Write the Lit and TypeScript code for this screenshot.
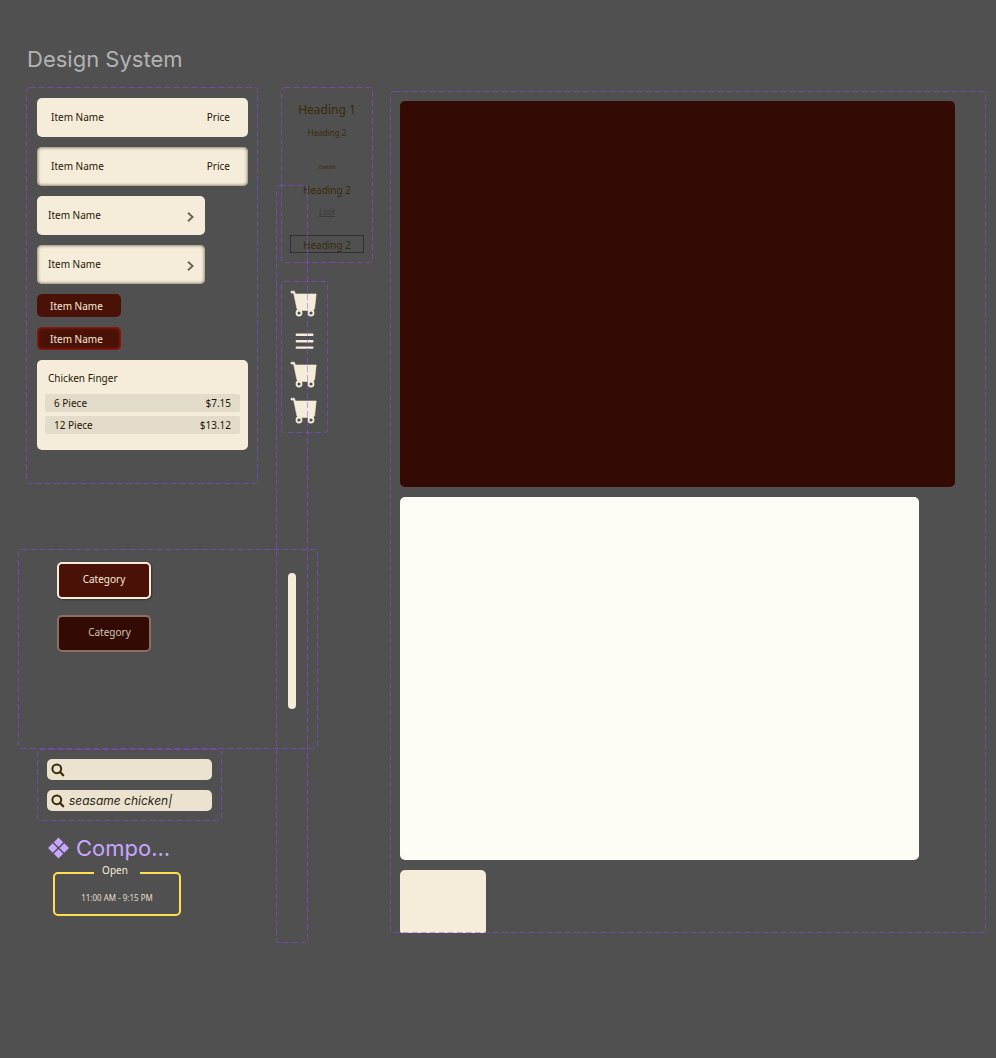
import { LitElement, html, css } from "lit";
import { customElement, property } from "lit/decorators.js";

/* A dashed component-set frame; the outline is painted above its content. */
@customElement("set-frame")
class SetFrame extends LitElement {
  static styles = css`
    :host {
      display: block;
      position: relative;
      box-sizing: border-box;
    }
    .outline {
      position: absolute;
      inset: 0;
      width: 100%;
      height: 100%;
      pointer-events: none;
      z-index: 1;
    }
    .outline rect {
      x: 0.5px;
      y: 0.5px;
      width: calc(100% - 1px);
      height: calc(100% - 1px);
      rx: 3px;
      fill: none;
      stroke: rgba(151, 71, 255, 0.5);
      stroke-width: 1px;
      stroke-dasharray: 6 3;
    }
  `;
  render() {
    return html`<slot></slot><svg class="outline" aria-hidden="true"><rect /></svg>`;
  }
}

/* One selectable menu row: optional price or chevron at its end. */
@customElement("menu-item")
class MenuItem extends LitElement {
  @property() label = "Item Name";
  @property() price = "";
  @property({ type: Boolean }) chevron = false;

  static styles = css`
    :host {
      display: block;
    }
    .item {
      display: flex;
      align-items: center;
      justify-content: space-between;
      box-sizing: border-box;
      width: 100%;
      height: 39px;
      margin: 0;
      padding: 0 18px 1px 14px;
      border: 0;
      border-radius: 5px;
      background: #f5edda;
      color: #1f1604;
      font: 10px/16px "Noto Sans", "Open Sans", sans-serif;
    }
    :host([chevron]) .item {
      padding: 0 11px 1px;
    }
    :host([active]) .item {
      box-shadow: inset 0 0 3px 1px #8f8775;
    }
    .chevron {
      width: 7px;
      height: 10px;
      margin-top: 4px;
    }
  `;
  render() {
    return html`<button class="item" type="button">
      <span>${this.label}</span>
      ${this.chevron
        ? html`<svg class="chevron" viewBox="0 0 7 10" aria-hidden="true">
            <path d="M1 .8 5.6 5 1 9.2" fill="none" stroke="#6b6350" stroke-width="1.9" />
          </svg>`
        : html`<span>${this.price}</span>`}
    </button>`;
  }
}

const cart = html`<svg class="cart" viewBox="0 0 27 27" aria-hidden="true">
  <path d="M1 1.2h3.4L5.4 4H26.2L24.6 18.6 23.2 20.4H8.2L7 19 3.6 3H1z" fill="#f5edda" stroke="#f5edda" stroke-width=".6" stroke-linejoin="round" />
  <circle cx="9" cy="23" r="2.5" fill="#505050" stroke="#f5edda" stroke-width="1.8" />
  <circle cx="21" cy="23" r="2.5" fill="#505050" stroke="#f5edda" stroke-width="1.8" />
</svg>`;

const burger = html`<svg class="burger" viewBox="0 0 27 26" aria-hidden="true">
  <path d="M6.8 8.8h15.6M6.8 15.2h15.6M6.8 21.6h15.6" stroke="#f5edda" stroke-width="2.4" stroke-linecap="round" />
</svg>`;

const magnifier = html`<svg class="magnifier" viewBox="0 0 14 14" aria-hidden="true">
  <circle cx="5.8" cy="5.8" r="4.4" fill="none" stroke="#3a2a08" stroke-width="2" />
  <path d="m9 9 3.200 3.200" stroke="#3a2a08" stroke-width="2.3" stroke-linecap="round" />
</svg>`;

@customElement("app-root")
class AppRoot extends LitElement {
  static styles = css`
    :host {
      display: block;
      min-height: 100vh;
      box-sizing: border-box;
      padding: 44px 10px 40px 18px;
      position: relative;
      background: #505050;
      font: 10px/16px "Noto Sans", "Open Sans", sans-serif;
      color: #1f1604;
    }
    h1,
    h2,
    h3,
    p {
      margin: 0;
      font-weight: 400;
    }
    .title {
      padding-left: 9px;
      margin-bottom: 13px;
      color: #b3b3b3;
      font: 400 22px/30px Inter, sans-serif;
    }
    .board {
      display: flex;
      align-items: flex-start;
      gap: 17px;
    }
    .left {
      flex: none;
      width: 355px;
    }
    .top {
      display: flex;
      align-items: flex-start;
      justify-content: space-between;
      padding-left: 8px;
    }
    .stack {
      display: flex;
      flex-direction: column;
      gap: 18px;
    }

    .items {
      display: flex;
      flex-direction: column;
      align-items: flex-start;
      gap: 10px;
      width: 232px;
      padding: 11px 10px 34px 11px;
    }
    .items .wide {
      align-self: stretch;
    }
    .items .narrow {
      width: 168px;
    }
    .tag {
      width: 84px;
      height: 23px;
      padding: 0 13px;
      border: 0;
      border-radius: 5px;
      background: #4a1106;
      color: #f5edda;
      font: inherit;
      text-align: left;
      white-space: nowrap;
    }
    .tag.active {
      box-shadow: inset 0 0 3px 1px #a31d14;
    }
    .card {
      box-sizing: border-box;
      align-self: stretch;
      height: 90px;
      padding: 10px 8px;
      border-radius: 5px;
      background: #f5edda;
    }
    .card h3 {
      padding-left: 3px;
      font-size: 10px;
      line-height: 16px;
    }
    .sizes {
      width: 100%;
      margin-top: 4px;
      border-collapse: separate;
      border-spacing: 0 4px;
    }
    .sizes th,
    .sizes td {
      height: 18px;
      padding: 0 9px;
      background: #e3dcca;
      font-weight: 400;
      line-height: 18px;
      text-align: left;
    }
    .sizes th {
      border-radius: 2px 0 0 2px;
    }
    .sizes td {
      border-radius: 0 2px 2px 0;
      text-align: right;
    }

    .type {
      display: flex;
      flex-direction: column;
      align-items: center;
      width: 92px;
      padding: 13px 9px 10px;
      color: #3a2a08;
    }
    .type .h1 {
      font-size: 12px;
      line-height: 20px;
    }
    .type .small {
      margin-top: 5px;
      font-size: 8px;
    }
    .type .detail {
      margin-top: 20px;
      font-size: 6px;
      line-height: 12px;
    }
    .type .h2 {
      margin-top: 9px;
      font-size: 10px;
    }
    .type .link {
      margin-top: 8px;
      color: #3b3b3b;
      font-size: 9px;
      font-style: italic;
      line-height: 12px;
    }
    .type .boxed {
      box-sizing: border-box;
      align-self: stretch;
      margin-top: 17px;
      border: 1px solid #303030;
      font-size: 10px;
      line-height: 18px;
      height: 18px;
      text-align: center;
    }

    .icons {
      display: flex;
      flex-direction: column;
      gap: 9px;
      width: 47px;
      padding: 9px;
    }
    .cart {
      width: 27px;
      height: 27px;
    }
    .burger {
      width: 27px;
      height: 26px;
    }

    .categories {
      display: flex;
      flex-direction: column;
      align-items: flex-start;
      gap: 16px;
      width: 300px;
      height: 200px;
      margin-top: 65px;
      padding: 13px 39px;
    }
    .category {
      box-sizing: border-box;
      width: 94px;
      height: 37px;
      padding: 0 0 3px;
      border: 2px solid #f5edda;
      border-radius: 5px;
      background: #4a1106;
      color: #f5edda;
      font: inherit;
      box-shadow: 1px 1px 2px #333;
    }
    .category.muted {
      padding-left: 11px;
      border-color: #8c6f62;
      background: #330b04;
      color: #cfc4b8;
      box-shadow: none;
    }

    .search {
      display: flex;
      flex-direction: column;
      gap: 10px;
      width: 185px;
      margin-left: 19px;
      padding: 10px;
    }
    .field {
      display: flex;
      align-items: center;
      gap: 4px;
      box-sizing: border-box;
      height: 21px;
      padding: 0 4px;
      border-radius: 5px;
      background: #ebe3d0;
    }
    .magnifier {
      flex: none;
      width: 14px;
      height: 14px;
    }
    .field input {
      flex: 1;
      min-width: 0;
      padding: 0;
      border: 0;
      outline: 0;
      background: none;
      color: #2a2414;
      font: italic 400 12px/18px Inter, sans-serif;
    }

    .component {
      display: flex;
      align-items: center;
      gap: 7px;
      margin: 12px 0 0 30px;
      color: #c8a6ff;
      font: 400 22px/30px Inter, sans-serif;
    }
    .component svg {
      width: 21px;
      height: 22px;
    }
    .hours {
      box-sizing: border-box;
      width: 128px;
      height: 53px;
      margin: 0 0 0 35px;
      padding: 7px 0 0;
      border: 2px solid #ffdf4f;
      border-radius: 5px;
      color: #e6dfcf;
      font-size: 8px;
      text-align: center;
    }
    .hours legend {
      margin: 0 auto;
      padding: 0 12px 6px 8px;
      color: #f5edda;
      font-size: 10px;
      line-height: 14px;
    }

    .palette {
      flex: 1;
      min-width: 0;
      display: flex;
      flex-direction: column;
      gap: 10px;
      margin-top: 4px;
      padding: 10px 31px 0 10px;
    }
    .swatch {
      border-radius: 5px;
    }
    .maroon {
      height: 386px;
      background: #330b04;
    }
    .ivory {
      width: 93.5%;
      height: 363px;
      background: #fffcf5;
    }
    .cream {
      width: 15.5%;
      height: 63px;
      border-radius: 5px 5px 2px 2px;
      background: #f5edda;
    }

    .rail {
      position: absolute;
      top: 185px;
      left: 276px;
      width: 32px;
      height: 758px;
      padding: 388px 12px 0;
      pointer-events: none;
    }
    .thumb {
      height: 136px;
      border-radius: 4px;
      background: #f5edda;
    }
  `;

  render() {
    return html`
      <h1 class="title">Design System</h1>
      <div class="board">
        <div class="left">
          <div class="top">
            <set-frame class="items">
              <menu-item class="wide" price="Price"></menu-item>
              <menu-item class="wide" price="Price" active></menu-item>
              <menu-item class="narrow" chevron></menu-item>
              <menu-item class="narrow" chevron active></menu-item>
              <button class="tag" type="button">Item Name</button>
              <button class="tag active" type="button">Item Name</button>
              <section class="card">
                <h3 id="dish">Chicken Finger</h3>
                <table class="sizes" aria-labelledby="dish">
                  <tr><th scope="row">6 Piece</th><td>$7.15</td></tr>
                  <tr><th scope="row">12 Piece</th><td>$13.12</td></tr>
                </table>
              </section>
            </set-frame>
            <div class="stack">
              <set-frame class="type">
                <h2 class="h1">Heading 1</h2>
                <h3 class="small">Heading 2</h3>
                <p class="detail">Detail</p>
                <h3 class="h2">Heading 2</h3>
                <a class="link" href="#">Link</a>
                <h3 class="boxed">Heading 2</h3>
              </set-frame>
              <set-frame class="icons">${cart}${burger}${cart}${cart}</set-frame>
            </div>
          </div>
          <set-frame class="categories">
            <button class="category" type="button">Category</button>
            <button class="category muted" type="button">Category</button>
          </set-frame>
          <set-frame class="search">
            <label class="field">${magnifier}<input type="text" aria-label="Search" /></label>
            <label class="field">${magnifier}<input type="text" aria-label="Search" value="seasame chicken|" /></label>
          </set-frame>
          <h2 class="component">
            <svg viewBox="0 0 21 22" aria-hidden="true">
              <path d="M10.500 .5l4.700 4.700-4.700 4.700-4.700-4.700zM10.500 12.100l4.700 4.700-4.700 4.700-4.700-4.700zM4.700 6.300l4.700 4.700-4.700 4.700L0 11zM16.300 6.300L21 11l-4.700 4.700-4.700-4.700z" fill="#c8a6ff" />
            </svg>
            Compo...
          </h2>
          <fieldset class="hours">
            <legend>Open</legend>
            11:00 AM - 9:15 PM
          </fieldset>
        </div>
        <set-frame class="palette">
          <div class="swatch maroon"></div>
          <div class="swatch ivory"></div>
          <div class="swatch cream"></div>
        </set-frame>
      </div>
      <set-frame class="rail"><div class="thumb"></div></set-frame>
    `;
  }
}
